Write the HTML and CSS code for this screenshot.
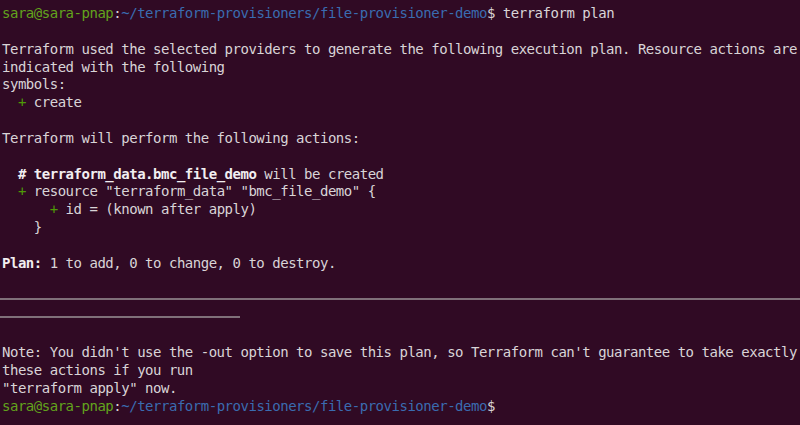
FILE: index.html
```html
<!DOCTYPE html>
<html>
<head>
<meta charset="utf-8">
<link rel="stylesheet" href="styles.css">
</head>
<body>
<div class="term">
<div class="ln"><span class="user">sara@sara-pnap</span>:<span class="path">~/terraform-provisioners/file-provisioner-demo</span>$ terraform plan</div>
<div class="ln"> </div>
<div class="ln">Terraform used the selected providers to generate the following execution plan. Resource actions are</div>
<div class="ln">indicated with the following</div>
<div class="ln">symbols:</div>
<div class="ln">  <span class="plus">+</span> create</div>
<div class="ln"> </div>
<div class="ln">Terraform will perform the following actions:</div>
<div class="ln"> </div>
<div class="ln">  <b>#</b> <b>terraform_data.bmc_file_demo</b> will be created</div>
<div class="ln">  <span class="plus">+</span> resource "terraform_data" "bmc_file_demo" {</div>
<div class="ln">      <span class="plus">+</span> id = (known after apply)</div>
<div class="ln">    }</div>
<div class="ln"> </div>
<div class="ln"><b>Plan:</b> 1 to add, 0 to change, 0 to destroy.</div>
<div class="ln"> </div>
<div class="ln rule"><span class="bar full"></span></div>
<div class="ln rule"><span class="bar short"></span></div>
<div class="ln"> </div>
<div class="ln">Note: You didn't use the -out option to save this plan, so Terraform can't guarantee to take exactly</div>
<div class="ln">these actions if you run</div>
<div class="ln">"terraform apply" now.</div>
<div class="ln"><span class="user">sara@sara-pnap</span>:<span class="path">~/terraform-provisioners/file-provisioner-demo</span>$</div>
</div>
</body>
</html>
```
FILE: styles.css
```css
html, body {
  margin: 0;
  padding: 0;
  background: #300a24;
}
body {
  width: 800px;
  height: 425px;
  overflow: hidden;
}
.term {
  padding: 5px 0 0 2px;
  font-family: "DejaVu Sans Mono", "Liberation Mono", monospace;
  font-size: 14px;
  letter-spacing: -0.48px;
  line-height: 17.85px;
  color: #d9d4d7;
}
.ln {
  white-space: pre;
  height: 17.85px;
}
.user {
  color: #62a31c;
}
.path {
  color: #3a6cb0;
}
.plus {
  color: #4e9a06;
}
b {
  font-weight: bold;
  color: #f2eff1;
}
.rule {
  display: flex;
  align-items: center;
  margin-left: -2px;
}
.bar {
  display: block;
  height: 2px;
  background: #7f7079;
}
.full {
  width: 800px;
}
.short {
  width: 240px;
}
```
